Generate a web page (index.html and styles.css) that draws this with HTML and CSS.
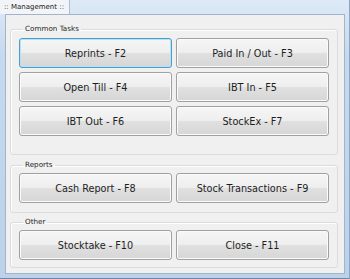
FILE: index.html
```html
<!DOCTYPE html>
<html>
<head>
<meta charset="utf-8">
<link rel="stylesheet" href="styles.css">
</head>
<body>
<div class="window">
  <div class="titlebar"><span class="title">:: Management ::</span></div>
  <div class="client">
    <fieldset class="group g1">
      <legend>Common Tasks</legend>
      <div class="grid">
        <button class="btn focus">Reprints - F2</button>
        <button class="btn">Paid In / Out - F3</button>
        <button class="btn">Open Till - F4</button>
        <button class="btn">IBT In - F5</button>
        <button class="btn">IBT Out - F6</button>
        <button class="btn">StockEx - F7</button>
      </div>
    </fieldset>
    <fieldset class="group g2">
      <legend>Reports</legend>
      <div class="grid">
        <button class="btn">Cash Report - F8</button>
        <button class="btn">Stock Transactions - F9</button>
      </div>
    </fieldset>
    <fieldset class="group g3">
      <legend>Other</legend>
      <div class="grid">
        <button class="btn">Stocktake - F10</button>
        <button class="btn">Close - F11</button>
      </div>
    </fieldset>
  </div>
</div>
</body>
</html>
```
FILE: styles.css
```css
html, body {
  margin: 0;
  padding: 0;
}
body {
  width: 350px;
  height: 279px;
  overflow: hidden;
  font-family: "DejaVu Sans", Verdana, sans-serif;
}
.window {
  box-sizing: border-box;
  width: 350px;
  height: 279px;
  background: linear-gradient(#dde9f6, #c6d9ef 20%, #bcd2ea);
  border-right: 1px solid #8ea6c2;
  border-bottom: 1px solid #6f87a3;
  display: flex;
  flex-direction: column;
}
.titlebar {
  height: 14px;
  display: flex;
  flex: none;
}
.title {
  display: block;
  height: 14px;
  line-height: 14px;
  padding: 0 5px 0 4px;
  background: #f2f4f7;
  border-right: 1px solid #a9bdd3;
  font-size: 7px;
  color: #1a1a1a;
}
.client {
  flex: 1;
  margin: 0 4px 4px 5px;
  border: 1px solid #a3b4c8;
  background: #f0f0f0;
  display: flex;
  flex-direction: column;
}
.group {
  margin: 0 6px 0 4px;
  border: 1px solid #dcdcdc;
  border-radius: 3px;
  padding: 0 8px;
  min-width: 0;
  box-shadow: inset 1px 1px 0 #ffffff;
}
.group legend {
  font-size: 7.2px;
  line-height: 10px;
  padding: 0 2px;
  margin-left: 4px;
  color: #1a1a1a;
}
.g1 { margin-top: 9px; padding-top: 4px; padding-bottom: 18px; }
.g2 { margin-top: 5px; padding-top: 3px; padding-bottom: 9px; }
.g3 { margin-top: 4px; padding-top: 3px; padding-bottom: 7px; }
.grid {
  display: grid;
  grid-template-columns: 153px 153px;
  column-gap: 4px;
  row-gap: 4px;
}
.btn {
  height: 30px;
  margin: 0;
  padding: 0;
  border: 1px solid #a0a0a0;
  border-radius: 3px;
  background: linear-gradient(#f6f6f6 0%, #eeeeee 48%, #e0e0e0 52%, #d6d6d6 100%);
  box-shadow: inset 0 0 0 1px #fbfbfb;
  font-family: "DejaVu Sans", Verdana, sans-serif;
  font-size: 9.7px;
  color: #1e1e1e;
  text-align: center;
}
.btn.focus {
  border-color: #4f9cc8;
  box-shadow: inset 0 0 0 1px #b6e2f6;
}
```
